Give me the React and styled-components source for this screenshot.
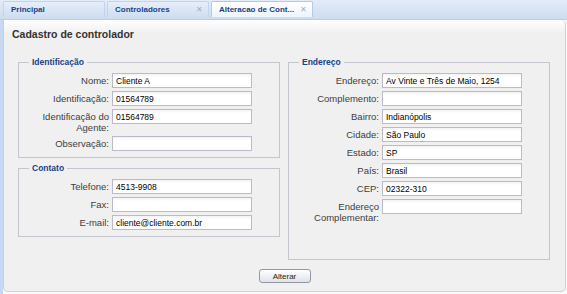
import React from 'react';
import styled, { createGlobalStyle } from 'styled-components';

const GlobalStyle = createGlobalStyle`
  body {
    margin: 0;
    background: #fff;
    font-family: "Liberation Sans", Arial, sans-serif;
  }
`;

const Page = styled.div`
  width: 567px;
  height: 294px;
  display: flex;
  flex-direction: column;
  overflow: hidden;
`;

const TabStrip = styled.div`
  height: 20px;
  box-sizing: border-box;
  display: flex;
  align-items: flex-end;
  gap: 2px;
  padding: 0 0 2px 3px;
  background: linear-gradient(#e3ecf8, #cddcf0);
  border-bottom: 1px solid #b9cde8;
`;

const Tab = styled.div`
  width: 102px;
  height: 16px;
  box-sizing: border-box;
  display: flex;
  align-items: center;
  justify-content: space-between;
  padding: 0 5px 0 7px;
  border: 1px solid ${(p) => (p.$active ? '#b4c9e6' : '#c2d4ec')};
  border-bottom: none;
  border-radius: 2px 2px 0 0;
  background: ${(p) =>
    p.$active
      ? 'linear-gradient(#ffffff, #eef4fc)'
      : 'linear-gradient(#e6eef9, #d0def1)'};
  font-size: 8px;
  font-weight: bold;
  color: #15428b;
  white-space: nowrap;
`;

const Close = styled.span`
  font-size: 8px;
  font-weight: normal;
  color: #a3aebd;
  line-height: 1;
`;

const Body = styled.div`
  flex: 1;
  display: flex;
  border-left: 3px solid #c6d9f1;
  padding: 0 3px 2px 0;
  background: #fafafa;
`;

const Panel = styled.div`
  flex: 1;
  display: flex;
  flex-direction: column;
  border: 1px solid #cfcfcf;
  border-top: none;
  border-radius: 0 5px 5px 5px;
  background: linear-gradient(#ffffff, #f0f0f0 14px);
`;

const Title = styled.h1`
  margin: 0;
  padding: 7px 8px 0;
  font-size: 10.5px;
  line-height: 14px;
  font-weight: bold;
  color: #333;
`;

const Columns = styled.div`
  display: flex;
  gap: 8px;
  margin-top: 16px;
  padding: 0 15px 0 14px;
  align-items: flex-start;
`;

const Column = styled.div`
  width: 262px;
  display: flex;
  flex-direction: column;
  gap: 5px;
`;

const Group = styled.fieldset`
  margin: 0;
  padding: 0 0 6px 0;
  border: 1px solid #c3c5cf;
  box-sizing: border-box;
  height: ${(p) => (p.$height ? `${p.$height}px` : 'auto')};
`;

const Legend = styled.legend`
  margin-left: 10px;
  padding: 0 3px;
  font-size: 8.5px;
  line-height: 10px;
  font-weight: bold;
  color: #15428b;
`;

const Fields = styled.div`
  display: grid;
  grid-template-columns: 85px 140px;
  column-gap: 3px;
  row-gap: 3px;
  padding: 6px 0 0 5px;
`;

const Label = styled.label`
  text-align: right;
  font-size: 9.5px;
  line-height: 11px;
  padding-top: 2px;
  color: #3d3d3d;
`;

const Input = styled.input`
  height: 15px;
  box-sizing: border-box;
  padding: 0 3px;
  border: 1px solid #b9bcc8;
  background: linear-gradient(#f2f2f2, #ffffff 3px);
  font-family: "Liberation Sans", Arial, sans-serif;
  font-size: 8.5px;
  color: #000;
  outline: none;
`;

const Actions = styled.div`
  display: flex;
  justify-content: center;
  margin-top: 9px;
`;

const Button = styled.button`
  width: 52px;
  height: 14px;
  padding: 0;
  border: 1px solid #8e98a8;
  border-radius: 3px;
  background: linear-gradient(#ffffff, #dfe2e7);
  font-family: "Liberation Sans", Arial, sans-serif;
  font-size: 8px;
  color: #222;
`;

const identificacao = [
  ['Nome:', 'Cliente A'],
  ['Identificação:', '01564789'],
  ['Identificação do Agente:', '01564789'],
  ['Observação:', ''],
];

const contato = [
  ['Telefone:', '4513-9908'],
  ['Fax:', ''],
  ['E-mail:', 'cliente@cliente.com.br'],
];

const endereco = [
  ['Endereço:', 'Av Vinte e Três de Maio, 1254'],
  ['Complemento:', ''],
  ['Bairro:', 'Indianópolis'],
  ['Cidade:', 'São Paulo'],
  ['Estado:', 'SP'],
  ['País:', 'Brasil'],
  ['CEP:', '02322-310'],
  ['Endereço Complementar:', ''],
];

const FieldGroup = ({ title, rows, height }) => (
  <Group $height={height}>
    <Legend>{title}</Legend>
    <Fields>
      {rows.map(([label, value]) => (
        <React.Fragment key={label}>
          <Label>{label}</Label>
          <Input defaultValue={value} />
        </React.Fragment>
      ))}
    </Fields>
  </Group>
);

const App = () => (
  <Page>
    <GlobalStyle />
    <TabStrip>
      <Tab>Principal</Tab>
      <Tab>
        Controladores <Close>✕</Close>
      </Tab>
      <Tab $active>
        Alteracao de Cont... <Close>✕</Close>
      </Tab>
    </TabStrip>
    <Body>
      <Panel>
        <Title>Cadastro de controlador</Title>
        <Columns>
          <Column>
            <FieldGroup title="Identificação" rows={identificacao} />
            <FieldGroup title="Contato" rows={contato} />
          </Column>
          <Column>
            <FieldGroup title="Endereço" rows={endereco} height={203} />
          </Column>
        </Columns>
        <Actions>
          <Button>Alterar</Button>
        </Actions>
      </Panel>
    </Body>
  </Page>
);

export default App;
